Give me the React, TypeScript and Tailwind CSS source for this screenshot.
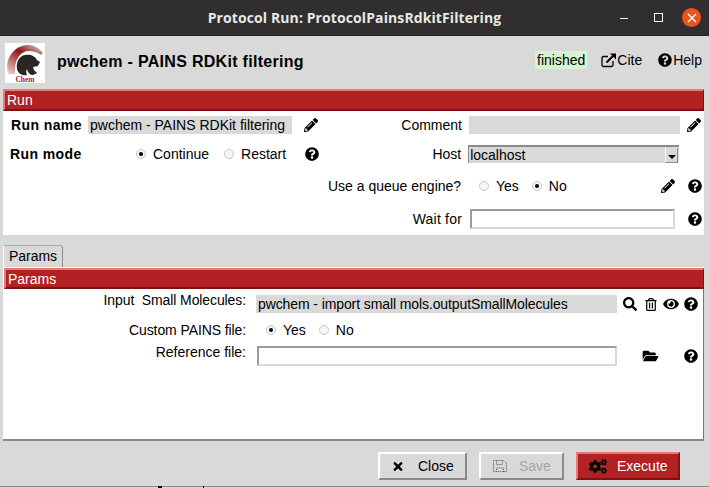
import React from "react";
import {
  FaCogs,
  FaEye,
  FaFolderOpen,
  FaPencilAlt,
  FaQuestionCircle,
  FaRegTrashAlt,
  FaSearch,
  FaTimes,
} from "react-icons/fa";

const Help = ({ className = "" }: { className?: string }) => (
  <FaQuestionCircle className={`h-[14px] w-[14px] shrink-0 text-black ${className}`} />
);

const Pencil = ({ className = "" }: { className?: string }) => (
  <FaPencilAlt className={`h-[14px] w-[14px] shrink-0 text-black ${className}`} />
);

const Radio = ({ on, label, className = "" }: { on?: boolean; label: string; className?: string }) => (
  <div className={`flex items-center ${className}`}>
    <span className="flex h-[10px] w-[10px] shrink-0 items-center justify-center rounded-full border border-[#c8c8c8] bg-[#f6f6f6]">
      {on && <span className="h-[4px] w-[4px] rounded-full bg-black" />}
    </span>
    <span className="ml-[7px]">{label}</span>
  </div>
);

const SectionBar = ({ label, className = "" }: { label: string; className?: string }) => (
  <div
    className={`flex items-center border-t-2 border-r border-b-2 border-l-2 border-t-[#e87a7a] border-r-[#7c1212] border-b-[#7c1212] border-l-[#e87a7a] bg-[#b22222] pl-[2px] text-white ${className}`}
  >
    {label}
  </div>
);

const Logo = () => (
  <div className="h-[40px] w-[40px] shrink-0 bg-white">
    <svg viewBox="0 0 40 40" className="h-[40px] w-[40px]">
      <defs>
        <linearGradient id="arc" x1="0.9" y1="0" x2="0.1" y2="1">
          <stop offset="0" stopColor="#d8c4c4" />
          <stop offset="0.4" stopColor="#8c1414" />
          <stop offset="1" stopColor="#ecc8c8" />
        </linearGradient>
      </defs>
      <path d="M3 31C-1 15 10 2 23 2c6 0 11 3 15 8l-2 2c-4-3-8-4-12-4C15 8 9 17 10 31z" fill="url(#arc)" />
      <path d="M12 26c-1-7 2-13 8-14 6-1 10 1 12 5l3 2-2 4-5 1 1 3 3 3-4 2c-3 0-5-2-6-6-1 2-1 4 0 6-4 1-9-1-10-6z" fill="#2b2626" />
      <text x="20" y="38.500" textAnchor="middle" fontFamily="'Liberation Serif', serif" fontWeight="700" fontSize="7.500" fill="#b22222">
        Chem
      </text>
    </svg>
  </div>
);

export default function App() {
  return (
    <div className="relative flex h-[488px] w-[709px] flex-col overflow-hidden bg-[#d9d9d9] font-['Liberation_Sans',sans-serif] text-[14px] leading-none text-black">
      <div className="relative flex h-[36px] shrink-0 items-center justify-center border-b border-[#222] bg-[#302e2e]">
        <span className="font-['Open_Sans',sans-serif] text-[14px] font-bold tracking-[0.1px] text-[#e8e8e8]">
          Protocol Run: ProtocolPainsRdkitFiltering
        </span>
        <span className="absolute top-[18px] left-[620px] h-[1px] w-[8px] bg-white" />
        <span className="absolute top-[13px] left-[654px] h-[9px] w-[9px] border border-white" />
        <span className="absolute top-[8px] left-[682px] flex h-[19px] w-[19px] items-center justify-center rounded-full bg-[#e95420]">
          <svg viewBox="0 0 10 10" className="h-[10px] w-[10px]" stroke="white" strokeWidth="1.400">
            <path d="M1 1l8 8M9 1l-8 8" />
          </svg>
        </span>
      </div>

      <div className="flex h-[53px] shrink-0 items-center pl-[5px]">
        <Logo />
        <span className="mb-[2px] ml-[12px] text-[16px] font-bold tracking-[0.3px]">pwchem - PAINS RDKit filtering</span>
        <div className="mb-[5px] ml-auto flex items-center">
          <span className="flex h-[18px] items-center bg-[#d4f5d0] px-[2px]">finished</span>
          <svg viewBox="0 0 16 16" className="ml-[14px] h-[16px] w-[16px]" fill="none" stroke="black">
            <path d="M12 9v4a1.500 1.500 0 0 1-1.500 1.500H2.500A1.500 1.500 0 0 1 1 13V6a1.500 1.500 0 0 1 1.500-1.500H7" strokeWidth="1.300" />
            <path d="M5.500 10.500 13 3" strokeWidth="2" />
            <path d="M9 1.500h6v6z" fill="black" stroke="none" />
          </svg>
          <span>Cite</span>
          <FaQuestionCircle className="ml-[16px] h-[14px] w-[14px]" />
          <span className="mr-[7px] ml-[1px]">Help</span>
        </div>
      </div>

      <div className="ml-[3px] w-[701px] shrink-0">
        <SectionBar label="Run" className="h-[22px]" />
        <div className="bg-white pb-[1px]">
          <div className="flex h-[28px] items-center">
            <span className="ml-[8px] w-[77px] font-bold tracking-[0.4px]">Run name</span>
            <span className="flex h-[18px] w-[204px] items-center bg-[#d9d9d9] pl-[2px]">pwchem - PAINS RDKit filtering</span>
            <Pencil className="ml-[12px]" />
            <span className="w-[144px] text-right">Comment</span>
            <span className="ml-[7px] h-[18px] w-[211px] bg-[#d9d9d9]" />
            <Pencil className="ml-[7px]" />
          </div>
          <div className="flex h-[29px] items-center pt-[1px]">
            <span className="ml-[7px] w-[126px] font-bold tracking-[0.4px]">Run mode</span>
            <Radio on label="Continue" />
            <Radio label="Restart" className="ml-[15px]" />
            <Help className="ml-[19px]" />
            <span className="ml-[93px] w-[49px] text-right">Host</span>
            <span className="ml-[7px] flex h-[18px] w-[211px] items-center justify-between border-t-2 border-l border-t-[#8a8a8a] border-l-[#8a8a8a] bg-[#d9d9d9] pl-[1px]">
              localhost
              <span className="mr-[1px] flex h-[15px] w-[13px] items-end justify-center border-r border-b border-l border-r-[#8a8a8a] border-b-[#8a8a8a] border-l-white pb-[3px]">
                <span className="h-0 w-0 border-x-[4px] border-t-[4px] border-x-transparent border-t-black" />
              </span>
            </span>
          </div>
          <div className="flex h-[36px] items-center">
            <span className="ml-[325px] w-[139px]">Use a queue engine?</span>
            <Radio label="Yes" className="ml-[12px]" />
            <Radio on label="No" className="ml-[13px]" />
            <Pencil className="ml-[94px]" />
            <Help className="ml-[13px]" />
          </div>
          <div className="flex h-[30px] items-center">
            <span className="w-[459px] text-right tracking-[0.2px]">Wait for</span>
            <span className="ml-[8px] h-[20px] w-[205px] border-2 border-t-[#9a9a9a] border-r-[#d9d9d9] border-b-[#d9d9d9] border-l-[#9a9a9a] bg-white" />
            <Help className="ml-[13px]" />
          </div>
        </div>
      </div>

      <div className="mt-[10px] ml-[3px] flex h-[22px] w-[60px] shrink-0 items-center justify-center rounded-t-[3px] border-t border-r border-l border-t-[#aaa] border-r-[#8a8a8a] border-l-white pb-[1px]">
        Params
      </div>

      <div className="ml-[3px] flex h-[174px] w-[701px] shrink-0 flex-col border-b-2 border-b-[#888] bg-white pt-[1px]">
        <SectionBar label="Params" className="ml-[1px] h-[21px]" />
        <div className="flex h-[28px] items-center border-r border-r-[#777] pt-[2px]">
          <span className="mb-[8px] w-[243px] text-right tracking-[-0.1px]">Input&nbsp; Small Molecules:</span>
          <span className="ml-[10px] flex h-[18px] w-[361px] items-center bg-[#d9d9d9] pl-[2px] tracking-[-0.1px]">
            pwchem - import small mols.outputSmallMolecules
          </span>
          <FaSearch className="ml-[6px] h-[14px] w-[14px]" />
          <FaRegTrashAlt className="ml-[8px] h-[13px] w-[12px]" />
          <FaEye className="ml-[6px] h-[14px] w-[16px]" />
          <Help className="ml-[5px]" />
        </div>
        <div className="flex h-[26px] items-center border-r border-r-[#777]">
          <span className="w-[243px] text-right tracking-[-0.1px]">Custom PAINS file:</span>
          <Radio on label="Yes" className="ml-[20px]" />
          <Radio label="No" className="ml-[13px]" />
        </div>
        <div className="flex h-[26px] items-center border-r border-r-[#777]">
          <span className="mb-[8px] w-[243px] text-right">Reference file:</span>
          <span className="ml-[11px] h-[20px] w-[360px] border-2 border-t-[#9a9a9a] border-r-[#d9d9d9] border-b-[#d9d9d9] border-l-[#9a9a9a] bg-white" />
          <FaFolderOpen className="ml-[25px] h-[14px] w-[17px]" />
          <Help className="ml-[25px]" />
        </div>
        <div className="grow border-r border-r-[#777]" />
      </div>

      <div className="flex h-[46px] shrink-0 items-start border-b border-b-[#888] pt-[11px] pl-[378px]">
        <button className="flex h-[28px] w-[89px] items-center border-2 border-t-white border-r-[#8a8a8a] border-b-[#8a8a8a] border-l-white pl-[12px]">
          <FaTimes className="h-[13px] w-[12px]" />
          <span className="ml-[14px]">Close</span>
        </button>
        <button className="ml-[12px] flex h-[28px] w-[85px] items-center border-2 border-t-white border-r-[#8a8a8a] border-b-[#8a8a8a] border-l-white pl-[12px] text-[#a6a6a6]">
          <svg viewBox="0 0 14 14" className="h-[14px] w-[14px]" fill="none" stroke="#555" strokeDasharray="1 1">
            <path d="M.500 1.500h10l3 3v8h-13zM3.500 1.500v4h6v-4M3.500 13v-4h7v4" />
          </svg>
          <span className="ml-[12px]">Save</span>
        </button>
        <button className="ml-[12px] flex h-[28px] w-[104px] items-center border-2 border-t-[#e87a7a] border-r-[#7c1212] border-b-[#7c1212] border-l-[#e87a7a] bg-[#b22222] pl-[11px] text-white">
          <FaCogs className="h-[17px] w-[18px] text-black" />
          <span className="ml-[10px]">Execute</span>
        </button>
      </div>
      <span className="absolute bottom-0 left-[158px] h-[2px] w-[4px] bg-black" />
      <span className="absolute bottom-0 left-[203px] h-[2px] w-[1px] bg-black" />
    </div>
  );
}
